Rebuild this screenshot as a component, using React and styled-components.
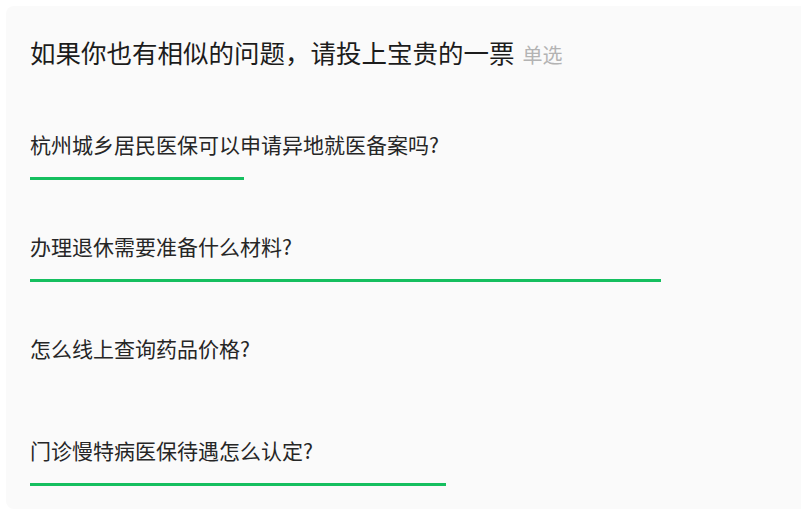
import React from 'react';
import styled, { createGlobalStyle } from 'styled-components';

const GlobalStyle = createGlobalStyle`
  html, body {
    margin: 0;
    padding: 0;
    background: #ffffff;
    overflow: hidden;
  }
  body {
    font-family: "Noto Sans CJK SC", "Noto Sans", sans-serif;
  }
`;

const options = [
  { text: '杭州城乡居民医保可以申请异地就医备案吗?', percent: 28.34 },
  { text: '办理退休需要准备什么材料?', percent: 83.58 },
  { text: '怎么线上查询药品价格?', percent: 0 },
  { text: '门诊慢特病医保待遇怎么认定?', percent: 55.1 },
];

function App() {
  return <Page>
    <GlobalStyle />
    <Card>
      <Header>
        <Title>如果你也有相似的问题，请投上宝贵的一票</Title>
        <Tag>单选</Tag>
      </Header>
      <List>
        {options.map((o) => (
          <Option key={o.text}>
            <Question>{o.text}</Question>
            <Track>
              <Bar style={{ width: o.percent + '%' }} />
            </Track>
          </Option>
        ))}
      </List>
    </Card>
  </Page>;
}

export default App;

const Page = styled.div`
  padding: 6px 0 0 6px;
  width: 801px;
  height: 510px;
  box-sizing: border-box;
`

const Card = styled.div`
  width: 803px;
  height: 503px;
  box-sizing: border-box;
  background: #fafafa;
  border-radius: 8px;
  padding: 28px 24px 23px 24px;
`

const Header = styled.div`
  display: flex;
  align-items: baseline;
  height: 36px;
  line-height: 36px;
`

const Title = styled.div`
  font-size: 25.5px;
  color: #1c1c1c;
`

const Tag = styled.span`
  margin-left: 8px;
  font-size: 20px;
  color: #b3b3b3;
`

const List = styled.div`
  margin-top: 59px;
  display: flex;
  flex-direction: column;
  gap: 51px;
`

const Option = styled.div`
  display: flex;
  flex-direction: column;
`

const Question = styled.div`
  font-size: 21px;
  line-height: 30px;
  color: #262626;
`

const Track = styled.div`
  margin-top: 18px;
  height: 3px;
`

const Bar = styled.div`
  height: 100%;
  background: #15bf5f;
`
